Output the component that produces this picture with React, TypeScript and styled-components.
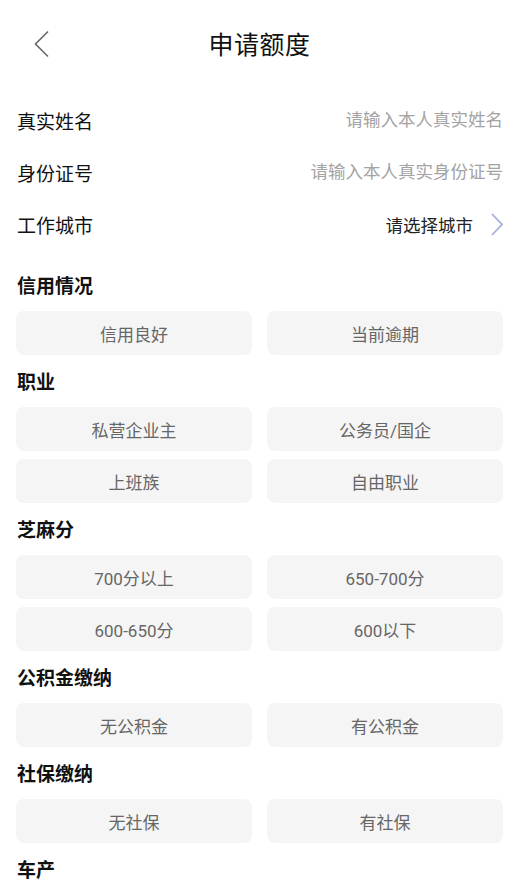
import React from 'react';
import styled, { createGlobalStyle } from 'styled-components';

const GlobalStyle = createGlobalStyle`
  html, body {
    margin: 0;
    padding: 0;
    background: #fff;
  }
  body {
    font-family: Roboto, "Noto Sans CJK SC", "Noto Sans", sans-serif;
    color: #111;
  }
`;

interface Section {
  title: string;
  options: string[];
}

const sections: Section[] = [
  { title: '信用情况', options: ['信用良好', '当前逾期'] },
  { title: '职业', options: ['私营企业主', '公务员/国企', '上班族', '自由职业'] },
  { title: '芝麻分', options: ['700分以上', '650-700分', '600-650分', '600以下'] },
  { title: '公积金缴纳', options: ['无公积金', '有公积金'] },
  { title: '社保缴纳', options: ['无社保', '有社保'] },
  { title: '车产', options: [] },
];

const App = () => {
  return (
    <Page>
      <GlobalStyle />
      <Header>
        <BackButton aria-label="返回">
          <svg width="16" height="28" viewBox="0 0 16 28">
            <path d="M14 1.5 L1.5 14 L14 26.5" fill="none" stroke="#666" strokeWidth="1.6" />
          </svg>
        </BackButton>
        <Title>申请额度</Title>
      </Header>

      <Form>
        <FieldRow>
          <Label>真实姓名</Label>
          <Input placeholder="请输入本人真实姓名" />
        </FieldRow>
        <FieldRow>
          <Label>身份证号</Label>
          <Input placeholder="请输入本人真实身份证号" />
        </FieldRow>
        <FieldRow>
          <Label>工作城市</Label>
          <Picker>
            请选择城市
            <svg width="12" height="23" viewBox="0 0 12 23">
              <path d="M1 1 L11 11.5 L1 22" fill="none" stroke="#a4acd8" strokeWidth="1.7" />
            </svg>
          </Picker>
        </FieldRow>
      </Form>

      {sections.map((s) => (
        <Group key={s.title}>
          <GroupTitle>{s.title}</GroupTitle>
          {s.options.length > 0 && (
            <Options>
              {s.options.map((o) => (
                <Option key={o}>{o}</Option>
              ))}
            </Options>
          )}
        </Group>
      ))}
    </Page>
  );
};

const Page = styled.div`
  width: 521px;
  min-height: 895px;
  box-sizing: border-box;
  padding: 0 18px 0 16px;
  overflow: hidden;
`;

const Header = styled.header`
  position: relative;
  height: 86px;
  display: flex;
  align-items: center;
  justify-content: center;
`;

const BackButton = styled.div`
  position: absolute;
  left: 18px;
  top: 30px;
  width: 16px;
  height: 28px;
  display: flex;
`;

const Title = styled.h1`
  margin: 0;
  font-size: 25px;
  font-weight: 400;
  color: #111;
  letter-spacing: 0.5px;
`;

const Form = styled.div`
  margin-top: 8px;
  display: flex;
  flex-direction: column;
`;

const FieldRow = styled.div`
  height: 52px;
  display: flex;
  align-items: center;
  justify-content: space-between;
  padding-left: 1px;
`;

const Label = styled.span`
  font-size: 19px;
  color: #111;
  flex-shrink: 0;
`;

const Input = styled.input`
  flex: 1;
  min-width: 0;
  border: none;
  outline: none;
  text-align: right;
  font-family: inherit;
  font-size: 17.5px;
  color: #333;
  padding: 0;
  background: transparent;
  &::placeholder {
    color: #a3a3a3;
  }
`;

const Picker = styled.div`
  display: flex;
  align-items: center;
  gap: 18px;
  font-size: 17.5px;
  color: #222;
`;

const Group = styled.section`
  margin-top: 23px;
  & + & {
    margin-top: 14px;
  }
`;

const GroupTitle = styled.h2`
  margin: 0 0 10px 1px;
  height: 28px;
  line-height: 27px;
  font-size: 19px;
  font-weight: 700;
  color: #111;
`;

const Options = styled.div`
  display: grid;
  grid-template-columns: 1fr 1fr;
  column-gap: 15px;
  row-gap: 8px;
`;

const Option = styled.div`
  height: 44px;
  border-radius: 8px;
  background: #f5f5f5;
  display: flex;
  align-items: center;
  justify-content: center;
  font-size: 17px;
  color: #666;
`;

export default App;
